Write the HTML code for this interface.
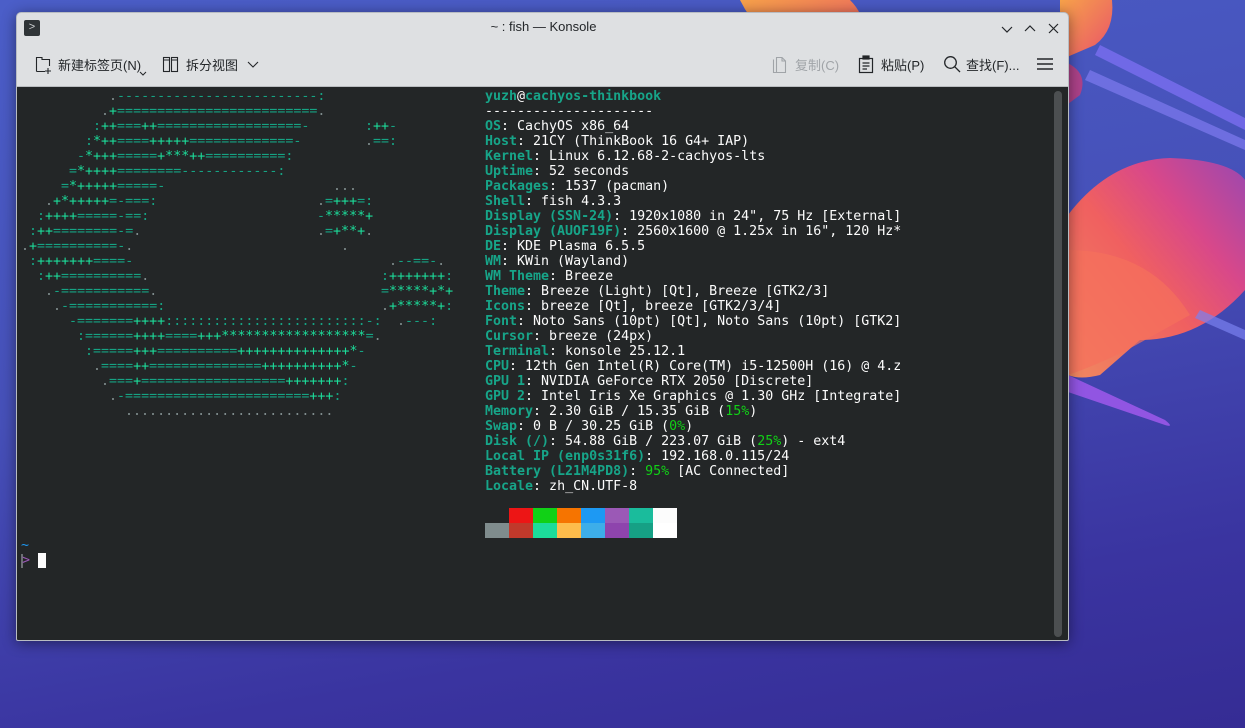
<!DOCTYPE html>
<html><head><meta charset="utf-8"><style>
*{margin:0;padding:0;box-sizing:border-box}
body{width:1245px;height:728px;overflow:hidden;position:relative;background:linear-gradient(170deg,#4b5ec8 0%,#4650b8 45%,#3a34a0 80%,#352c94 100%);font-family:"Liberation Sans","Noto Sans CJK SC",sans-serif}
#bg{position:absolute;left:0;top:0}
#win{position:absolute;left:16px;top:12px;width:1053px;height:629px;background:#dee0e2;border:1px solid #b8bcc2;border-radius:5px 5px 2px 2px;overflow:hidden;box-shadow:0 2px 14px rgba(0,0,0,.45)}
.ui{position:absolute;font-size:13px;color:#232629;white-space:nowrap;font-family:"Liberation Sans","Noto Sans CJK SC",sans-serif}
#term{position:absolute;left:0;top:74px;width:1053px;height:555px;background:#232627}
.m{position:absolute;font-family:"DejaVu Sans Mono",monospace;font-size:13.3px;line-height:15px;white-space:pre;color:#fcfcfc}
.row{position:absolute;height:15px;left:0}
.row span{position:absolute;top:0}
.a{color:#16a383}.b{color:#1cdc9a}.g{color:#7f8c8d}
.k{color:#17a589;font-weight:bold}.gr{color:#11d116}
.blk{position:absolute;width:24px;height:15px}
</style></head><body>
<svg id="bg" width="1245" height="728">
<defs>
<linearGradient id="o1" x1="0" y1="0" x2="1" y2="1"><stop offset="0" stop-color="#f7a24a"/><stop offset="1" stop-color="#e8506a"/></linearGradient>
<linearGradient id="o2" x1="0" y1="1" x2="1" y2="0"><stop offset="0" stop-color="#f08860"/><stop offset=".45" stop-color="#f06060"/><stop offset=".7" stop-color="#d8488a"/><stop offset="1" stop-color="#9a48b0"/></linearGradient>
</defs>
<path d="M1095 55 L1245 130 L1245 118 L1100 45 Z" fill="#7a6ef0" opacity=".8"/>
<path d="M1085 80 L1245 150 L1245 140 L1090 70 Z" fill="#7f7af0" opacity=".7"/>
<path d="M740 0 L850 0 Q870 20 860 45 L800 60 Q760 40 740 0Z" fill="url(#o1)"/>
<path d="M1060 0 L1112 0 Q1115 30 1095 45 L1060 60Z" fill="url(#o1)"/>
<path d="M1060 60 Q1090 70 1080 95 L1060 110Z" fill="#c04080" opacity=".85"/>
<path d="M1068 215 Q1110 160 1170 158 Q1230 160 1245 180 L1245 290 Q1200 340 1140 340 L1100 375 Q1080 380 1068 375Z" fill="url(#o2)"/>
<path d="M1068 250 Q1150 250 1190 315 L1145 340 Q1110 360 1068 375Z" fill="#f5705c" opacity=".7"/>
<path d="M1068 375 L1165 420 Q1175 428 1165 425 L1068 392Z" fill="#9a58e8" opacity=".9"/>
<path d="M1200 310 L1245 330 L1245 340 L1195 318Z" fill="#7a80f0" opacity=".7"/>
</svg>
<div id="win">
 <div style="position:absolute;left:7px;top:7px;width:16px;height:16px;background:#2f3437;border-radius:2px;color:#cfd2d4;font-size:11px;line-height:15px;text-align:center">&gt;</div>
 <div class="ui" style="left:0;width:1053px;text-align:center;top:6px">~ : fish — Konsole</div>
 <svg style="position:absolute;left:980px;top:8px" width="70" height="16" fill="none" stroke="#232629" stroke-width="1.2">
  <path d="M5 6 L10 11 L15 6"/><path d="M28 10 L33 5 L38 10"/><path d="M52 3 L61 12 M61 3 L52 12"/>
 </svg>
 <svg style="position:absolute;left:18px;top:43px" width="18" height="18" fill="none" stroke="#232629" stroke-width="1.1"><path d="M1.5 15.5 V1.5 H7 V3.5 H14.5 V10 M1.5 15.5 H10 M13 12 V18 M10 15 H16"/></svg>
 <div class="ui" style="left:41px;top:42px">新建标签页(N)</div>
 <svg style="position:absolute;left:122px;top:58px" width="8" height="6" fill="none" stroke="#232629"><path d="M1 1 L4 4 L7 1"/></svg>
 <svg style="position:absolute;left:145px;top:43px" width="18" height="18" fill="none" stroke="#232629" stroke-width="1.1"><rect x="1.5" y="1.5" width="6" height="14"/><rect x="9.5" y="1.5" width="6" height="14"/><path d="M1.5 4 H7.5 M9.5 4 H15.5"/></svg>
 <div class="ui" style="left:169px;top:42px">拆分视图</div>
 <svg style="position:absolute;left:229px;top:47px" width="14" height="10" fill="none" stroke="#232629" stroke-width="1.1"><path d="M2 2 L7 7 L12 2"/></svg>
 <svg style="position:absolute;left:755px;top:43px" width="18" height="18" fill="none" stroke="#a0a4a8" stroke-width="1.1"><path d="M1.5 3.5 V16.5 H4 M4.5 1.5 H10 L13.5 5 V16.5 H4.5 Z M10 1.5 V5 H13.5"/></svg>
 <div class="ui" style="left:778px;top:42px;color:#a0a4a8">复制(C)</div>
 <svg style="position:absolute;left:841px;top:42px" width="18" height="19" fill="none" stroke="#232629" stroke-width="1.2"><rect x="1.5" y="3.5" width="13" height="14"/><rect x="5" y="1" width="6" height="3" fill="#232629"/><path d="M4.5 8 H11.5 M4.5 11 H11.5 M4.5 14 H9"/></svg>
 <div class="ui" style="left:864px;top:42px">粘贴(P)</div>
 <svg style="position:absolute;left:926px;top:42px" width="19" height="19" fill="none" stroke="#232629" stroke-width="1.3"><circle cx="7.5" cy="7.5" r="5.8"/><path d="M11.7 11.7 L17 17"/></svg>
 <div class="ui" style="left:949px;top:42px">查找(F)...</div>
 <svg style="position:absolute;left:1019px;top:44px" width="18" height="14" stroke="#232629" stroke-width="1.6"><path d="M1 2 H17 M1 7 H17 M1 12 H17"/></svg>
 <div style="position:absolute;left:0;top:73px;width:1053px;height:1px;background:#b9bcbf"></div>
 <div id="term">
  <div style="position:absolute;left:1037px;top:4px;width:8px;height:546px;border-radius:4px;background:#4c4f51"></div>
  <div class="m" id="art" style="left:4px;top:2px"></div>
  <div class="m" style="left:468px;top:2px"><span class="k">yuzh</span>@<span class="k">cachyos-thinkbook</span>
---------------------
<span class="k">OS</span>: CachyOS x86_64
<span class="k">Host</span>: 21CY (ThinkBook 16 G4+ IAP)
<span class="k">Kernel</span>: Linux 6.12.68-2-cachyos-lts
<span class="k">Uptime</span>: 52 seconds
<span class="k">Packages</span>: 1537 (pacman)
<span class="k">Shell</span>: fish 4.3.3
<span class="k">Display (SSN-24)</span>: 1920x1080 in 24", 75 Hz [External]
<span class="k">Display (AUOF19F)</span>: 2560x1600 @ 1.25x in 16", 120 Hz*
<span class="k">DE</span>: KDE Plasma 6.5.5
<span class="k">WM</span>: KWin (Wayland)
<span class="k">WM Theme</span>: Breeze
<span class="k">Theme</span>: Breeze (Light) [Qt], Breeze [GTK2/3]
<span class="k">Icons</span>: breeze [Qt], breeze [GTK2/3/4]
<span class="k">Font</span>: Noto Sans (10pt) [Qt], Noto Sans (10pt) [GTK2]
<span class="k">Cursor</span>: breeze (24px)
<span class="k">Terminal</span>: konsole 25.12.1
<span class="k">CPU</span>: 12th Gen Intel(R) Core(TM) i5-12500H (16) @ 4.z
<span class="k">GPU 1</span>: NVIDIA GeForce RTX 2050 [Discrete]
<span class="k">GPU 2</span>: Intel Iris Xe Graphics @ 1.30 GHz [Integrate]
<span class="k">Memory</span>: 2.30 GiB / 15.35 GiB (<span class="gr">15%</span>)
<span class="k">Swap</span>: 0 B / 30.25 GiB (<span class="gr">0%</span>)
<span class="k">Disk (/)</span>: 54.88 GiB / 223.07 GiB (<span class="gr">25%</span>) - ext4
<span class="k">Local IP (enp0s31f6)</span>: 192.168.0.115/24
<span class="k">Battery (L21M4PD8)</span>: <span class="gr">95%</span> [AC Connected]
<span class="k">Locale</span>: zh_CN.UTF-8</div>
  <div class="blk" style="left:492px;top:421px;background:#ed1515"></div>
  <div class="blk" style="left:516px;top:421px;background:#11d116"></div>
  <div class="blk" style="left:540px;top:421px;background:#f67400"></div>
  <div class="blk" style="left:564px;top:421px;background:#1d99f3"></div>
  <div class="blk" style="left:588px;top:421px;background:#9b59b6"></div>
  <div class="blk" style="left:612px;top:421px;background:#1abc9c"></div>
  <div class="blk" style="left:636px;top:421px;background:#fcfcfc"></div>
  <div class="blk" style="left:468px;top:436px;background:#7f8c8d"></div>
  <div class="blk" style="left:492px;top:436px;background:#c0392b"></div>
  <div class="blk" style="left:516px;top:436px;background:#1cdc9a"></div>
  <div class="blk" style="left:540px;top:436px;background:#fdbc4b"></div>
  <div class="blk" style="left:564px;top:436px;background:#3daee9"></div>
  <div class="blk" style="left:588px;top:436px;background:#8e44ad"></div>
  <div class="blk" style="left:612px;top:436px;background:#16a085"></div>
  <div class="blk" style="left:636px;top:436px;background:#ffffff"></div>
  <div class="m" style="left:4px;top:451px;color:#1d99f3">~</div>
  <div style="position:absolute;left:4px;top:467px;width:2px;height:14px;background:#6c7073"></div>
  <div class="m" style="left:5px;top:466px;color:#9b59b6">&gt;</div>
  <div style="position:absolute;left:21px;top:466px;width:8px;height:15px;background:#fcfcfc"></div>
 </div>
</div>
<script>
var R=[
[[11,".-------------------------:"]],
[[10,".+=========================."]],
[[9,":++===++==================-"],[43,":++-"]],
[[8,":*++====+++++=============-"],[43,".==:"]],
[[7,"-*+++=====+***++==========:"]],
[[6,"=*++++========------------:"]],
[[5,"=*+++++=====-"],[39,"..."]],
[[3,".+*+++++=-===:"],[37,".=+++=:"]],
[[2,":++++=====-==:"],[37,"-*****+"]],
[[1,":++========-=."],[37,".=+**+."]],
[[0,".+==========-."],[40,"."]],
[[1,":+++++++====-"],[46,".--==-."]],
[[2,":++==========."],[45,":+++++++:"]],
[[3,".-===========."],[45,"=*****+*+"]],
[[4,".-===========:"],[45,".+*****+:"]],
[[6,"-=======++++:::::::::::::::::::::::::-:"],[47,".---:"]],
[[7,":======++++====+++******************=."]],
[[8,":=====+++==========++++++++++++++*-"]],
[[9,".====++==============++++++++++*-"]],
[[10,".===+==================+++++++:"]],
[[11,".-=======================+++:"]],
[[13,".........................."]]
];
var h="";
R.forEach(function(r,i){
 h+='<div class="row" style="top:'+(i*15)+'px">';
 r.forEach(function(s){
  var t="";
  for(var c of s[1]){var cl=(c=="+"||c=="*")?"b":(c=="."?"g":"a");t+='<span style="position:static" class="'+cl+'">'+c+'</span>';}
  h+='<span style="left:'+(s[0]*8)+'px">'+t+'</span>';
 });
 h+='</div>';
});
document.getElementById("art").innerHTML=h;
</script>
</body></html>
